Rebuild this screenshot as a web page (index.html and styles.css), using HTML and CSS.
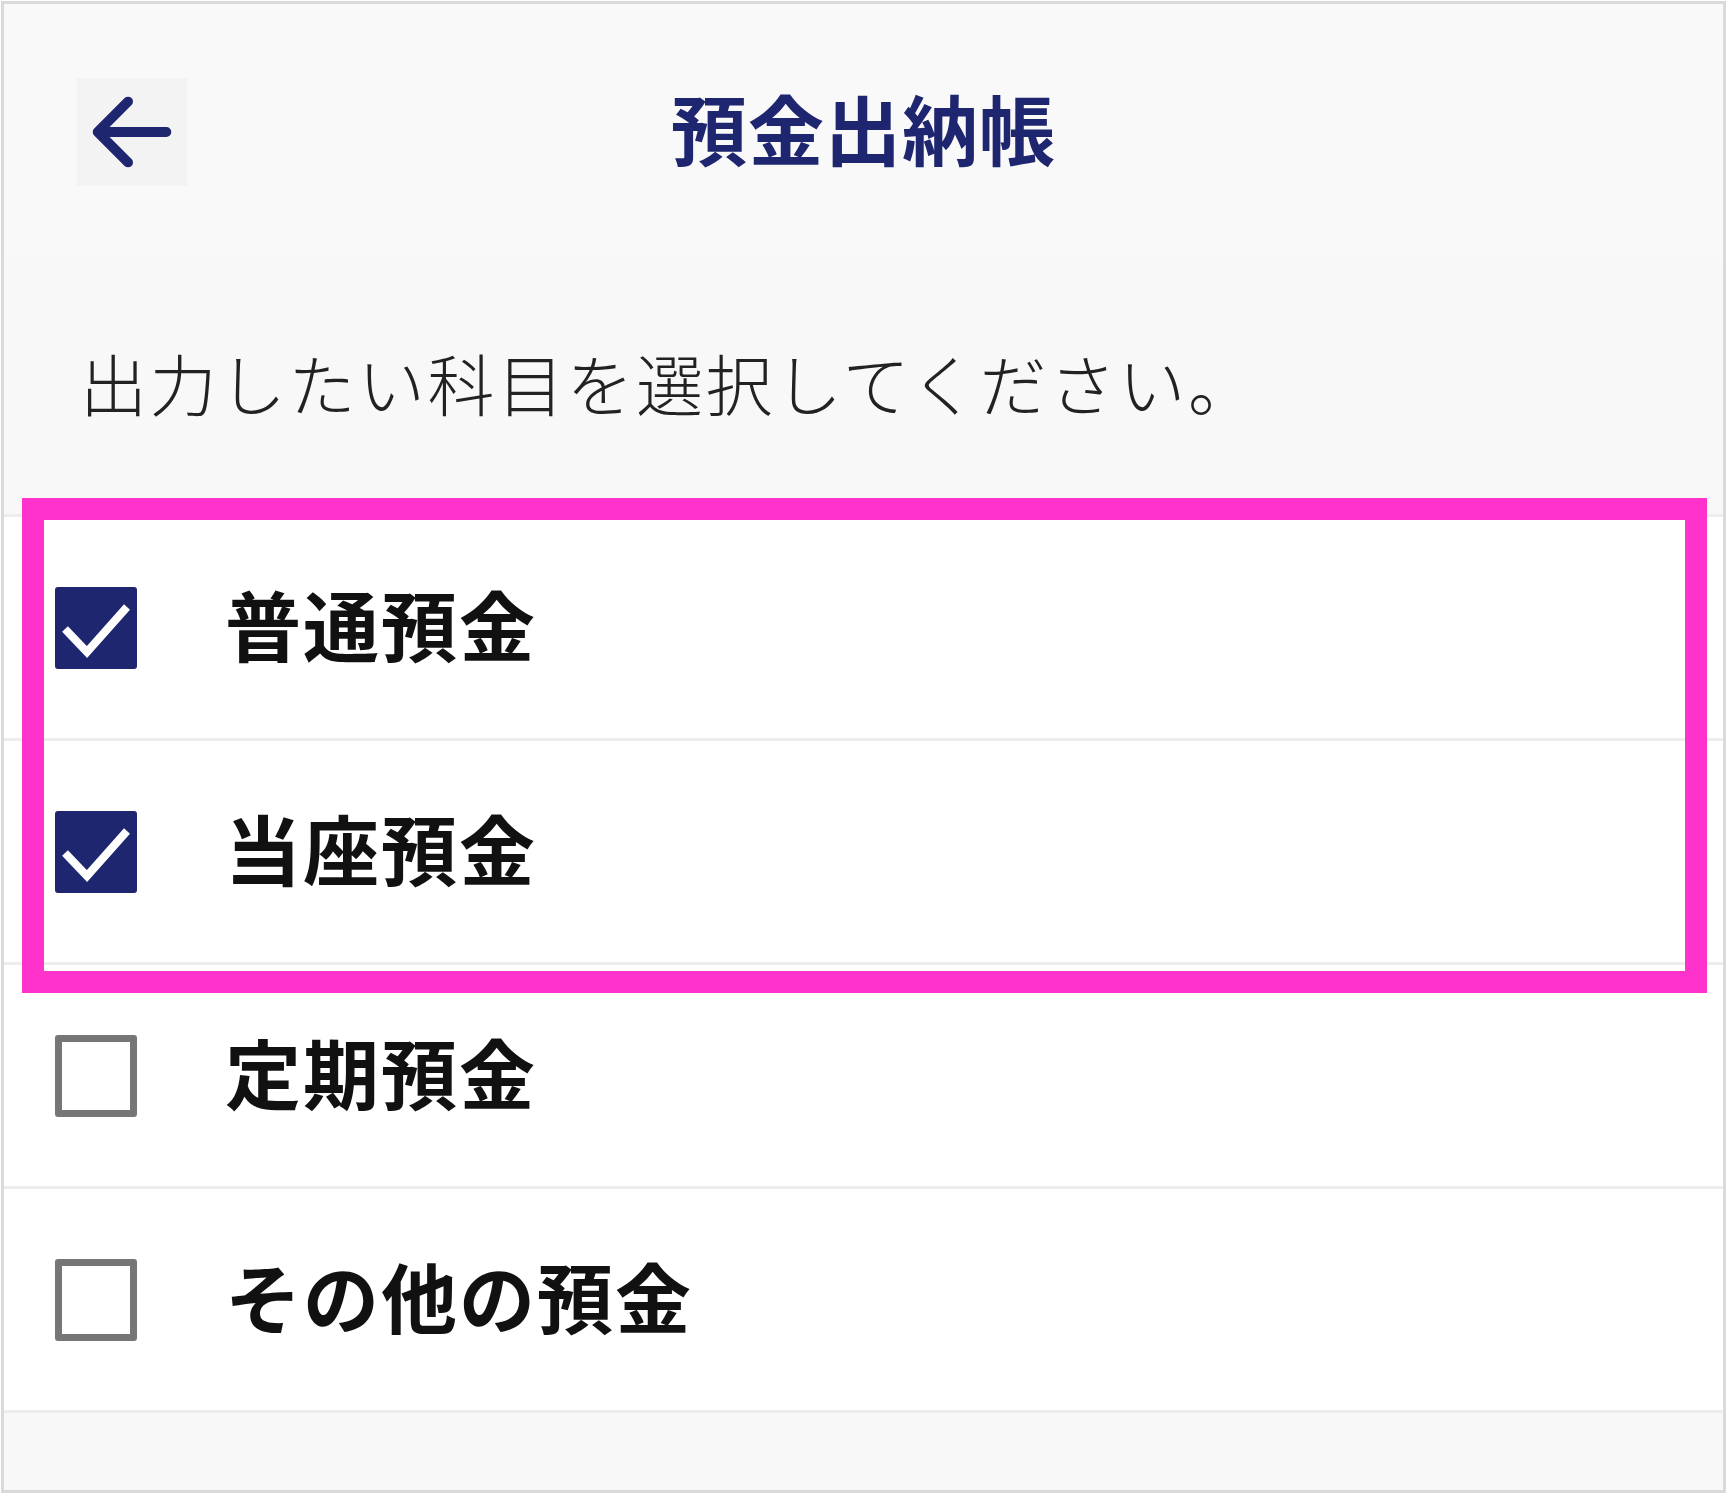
FILE: index.html
```html
<!DOCTYPE html>
<html lang="ja">
<head>
  <meta charset="UTF-8" />
  <meta name="viewport" content="width=device-width, initial-scale=1.0"/>
  <title>預金出納帳</title>
  <link rel="stylesheet" href="styles.css">
</head>
<body>
  <div class="frame">
    <header class="header">
      <div class="back-cell">
        <button class="back-btn" aria-label="戻る">
          <svg viewBox="0 0 110 110" width="110" height="108">
            <path d="M51 24 L20 55 L51 86 M20 55 H90" fill="none" stroke="#1f2670" stroke-width="10" stroke-linecap="round" stroke-linejoin="round"/>
          </svg>
        </button>
      </div>
      <h1 class="title">預金出納帳</h1>
      <div></div>
    </header>

    <div class="lead">
      <p>出力したい科目を選択してください。</p>
    </div>

    <!-- 科目リスト -->
    <div class="account-list">
      <label class="account-row">
        <span class="box checked">
          <svg viewBox="0 0 82 82" width="82" height="82"><path d="M10 42 L32 65 L72 20" fill="none" stroke="#fff" stroke-width="8"/></svg>
        </span>
        <span class="account-name">普通預金</span>
      </label>
      <label class="account-row">
        <span class="box checked">
          <svg viewBox="0 0 82 82" width="82" height="82"><path d="M10 42 L32 65 L72 20" fill="none" stroke="#fff" stroke-width="8"/></svg>
        </span>
        <span class="account-name">当座預金</span>
      </label>
      <label class="account-row">
        <span class="box"></span>
        <span class="account-name">定期預金</span>
      </label>
      <label class="account-row">
        <span class="box"></span>
        <span class="account-name">その他の預金</span>
      </label>

      <div class="highlight"></div>
    </div>

    <div class="footer"></div>
  </div>
</body>
</html>
```

FILE: styles.css
```css
body {
  margin: 0;
  font-family: "Noto Sans CJK JP", "Noto Sans", sans-serif;
  background: #fff;
  color: #222;
}
.frame {
  margin: 1px;
  border: 3px solid #dadada;
  background: #f8f8f8;
}
.header {
  height: 255px;
  display: grid;
  grid-template-columns: 1fr auto 1fr;
  align-items: center;
  background: #f9f9f9;
}
.back-cell {
  padding-left: 73px;
}
.back-btn {
  width: 110px;
  height: 108px;
  padding: 0;
  border: none;
  background: #f3f3f3;
  display: flex;
  align-items: center;
  justify-content: center;
  cursor: pointer;
}
.title {
  margin: 0 0 10px;
  font-size: 76px;
  font-weight: 700;
  letter-spacing: 1px;
  color: #1f2670;
  line-height: 1;
}
.lead {
  height: 255px;
  display: flex;
  align-items: center;
  padding-left: 76px;
}
.lead p {
  margin: 0 0 10px;
  font-size: 67px;
  font-weight: 300;
  letter-spacing: 2.5px;
  color: #222;
  line-height: 1;
}

/* 科目リスト */
.account-list {
  position: relative;
  background: #fff;
  border-top: 3px solid #ededed;
}
.account-row {
  height: 221px;
  display: flex;
  align-items: center;
  gap: 88px;
  padding-left: 51px;
  border-bottom: 3px solid #ededed;
  cursor: pointer;
}
.box {
  width: 82px;
  height: 82px;
  box-sizing: border-box;
  border: 7px solid #767676;
  border-radius: 3px;
  background: #fff;
  flex-shrink: 0;
}
.box.checked {
  border: none;
  background: #1f2670;
}
.box svg {
  display: block;
}
.account-name {
  margin-bottom: 10px;
  font-size: 76px;
  font-weight: 700;
  letter-spacing: 2px;
  color: #111;
  line-height: 1;
}
.highlight {
  position: absolute;
  top: -19px;
  left: 18px;
  width: 1685px;
  height: 495px;
  box-sizing: border-box;
  border: 22px solid #ff33cc;
  pointer-events: none;
}
.footer {
  height: 77px;
  background: #f8f8f8;
}
```
